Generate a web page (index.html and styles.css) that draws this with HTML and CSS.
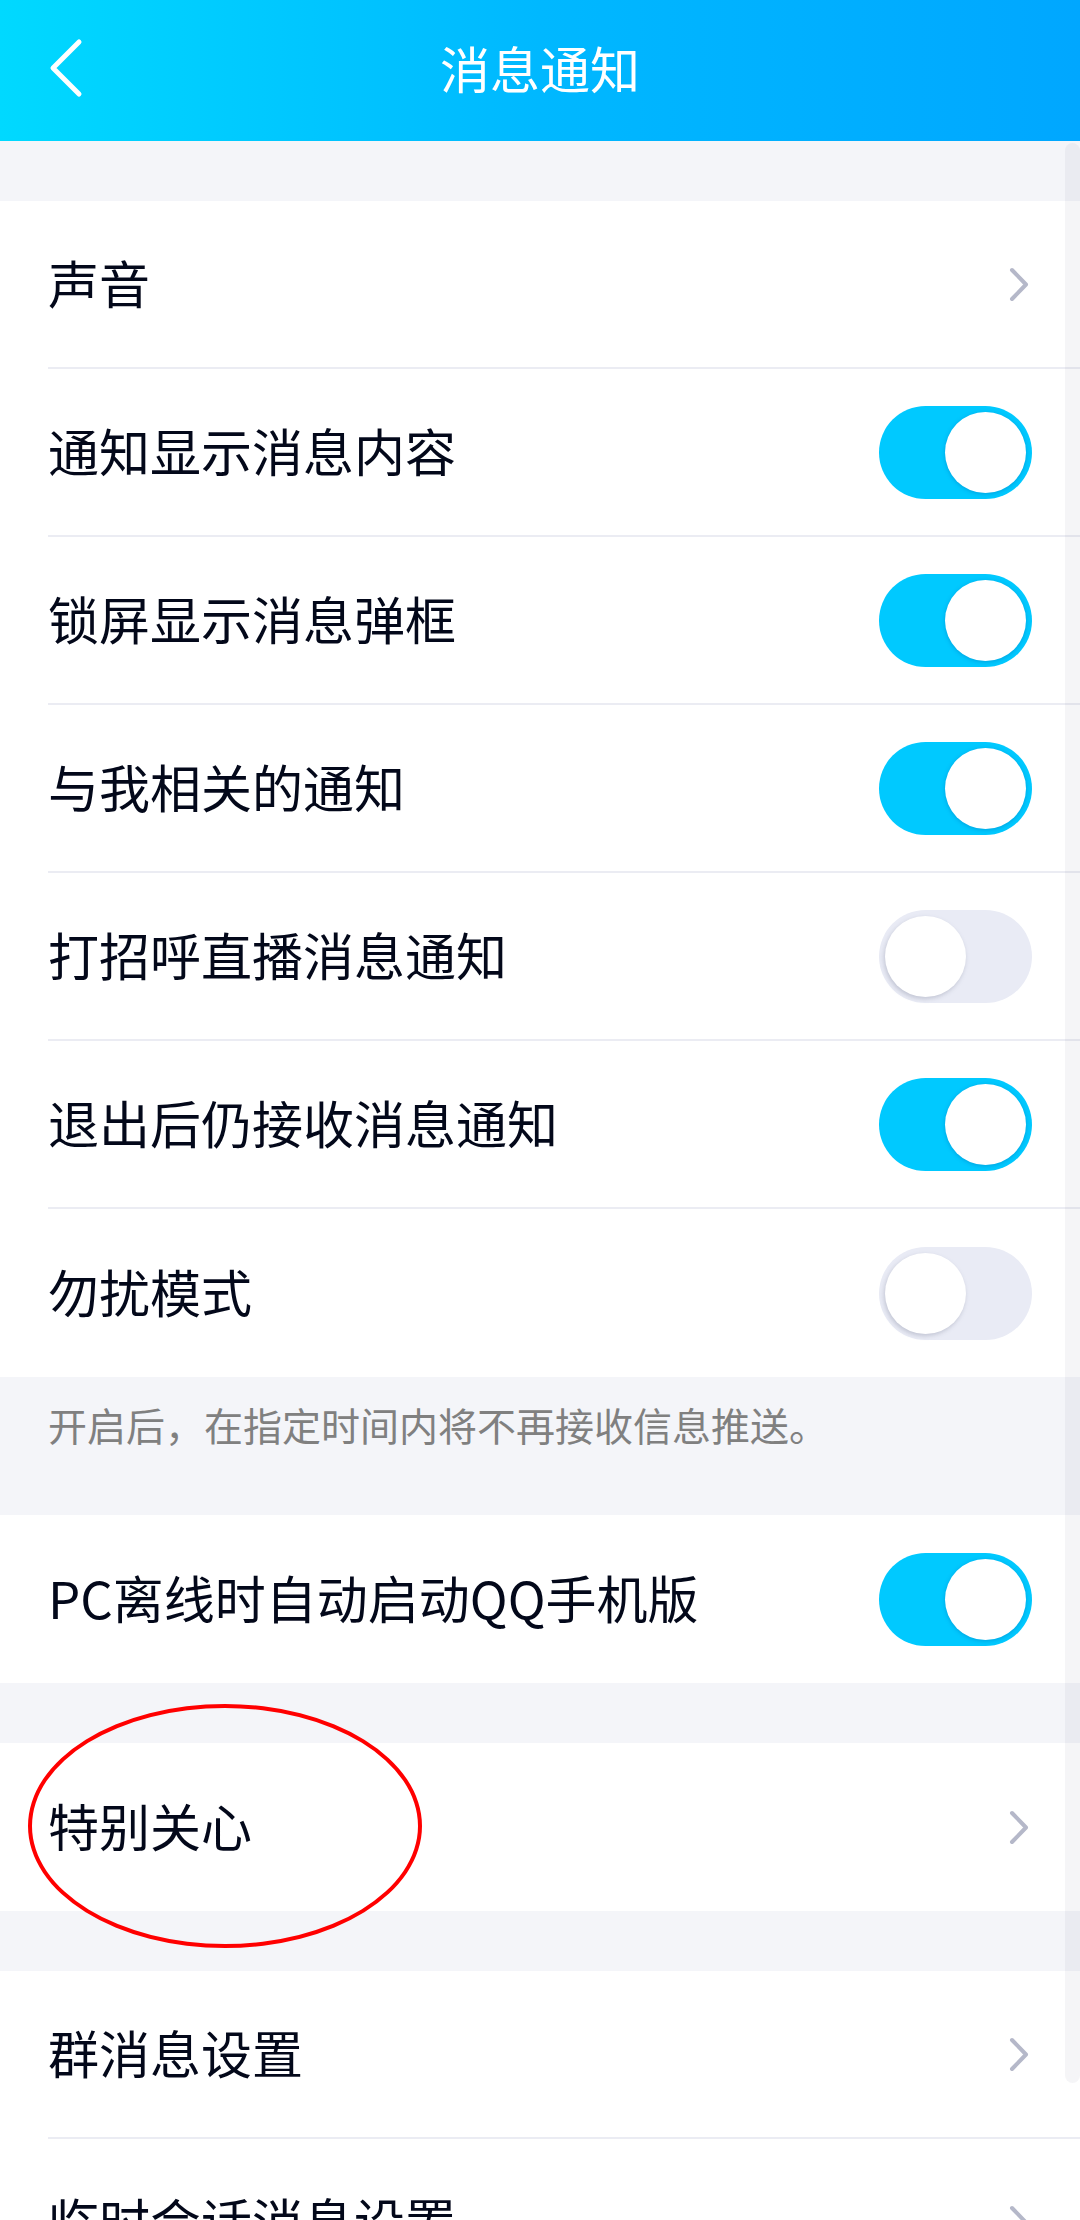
FILE: index.html
```html
<!DOCTYPE html>
<html lang="zh-CN">
<head>
<meta charset="utf-8">
<title>消息通知</title>
<link rel="stylesheet" href="styles.css">
</head>
<body>
<div class="screen">
  <header class="topbar">
    <div class="topbar-side">
      <svg class="back" width="40" height="64" viewBox="0 0 40 64" aria-hidden="true">
        <polyline points="31,6 5,32 31,58" fill="none" stroke="#ffffff" stroke-width="5" stroke-linecap="round" stroke-linejoin="round"/>
      </svg>
    </div>
    <h1 class="title">消息通知</h1>
    <div class="topbar-side"></div>
  </header>

  <div class="gap"></div>

  <section class="group">
    <div class="row"><div class="row-body"><span class="label">声音</span><svg class="chev" width="22" height="37" viewBox="0 0 22 37"><polyline points="4,4 18,18.5 4,33" fill="none" stroke="#b5b8c9" stroke-width="4" stroke-linecap="round" stroke-linejoin="round"/></svg></div></div>
    <div class="row"><div class="row-body"><span class="label">通知显示消息内容</span><span class="switch on"><span class="knob"></span></span></div></div>
    <div class="row"><div class="row-body"><span class="label">锁屏显示消息弹框</span><span class="switch on"><span class="knob"></span></span></div></div>
    <div class="row"><div class="row-body"><span class="label">与我相关的通知</span><span class="switch on"><span class="knob"></span></span></div></div>
    <div class="row"><div class="row-body"><span class="label">打招呼直播消息通知</span><span class="switch"><span class="knob"></span></span></div></div>
    <div class="row"><div class="row-body"><span class="label">退出后仍接收消息通知</span><span class="switch on"><span class="knob"></span></span></div></div>
    <div class="row last"><div class="row-body"><span class="label">勿扰模式</span><span class="switch"><span class="knob"></span></span></div></div>
  </section>

  <p class="note">开启后，在指定时间内将不再接收信息推送。</p>

  <section class="group">
    <div class="row last"><div class="row-body"><span class="label">PC离线时自动启动QQ手机版</span><span class="switch on"><span class="knob"></span></span></div></div>
  </section>

  <div class="gap"></div>

  <section class="group marked">
    <div class="row last"><div class="row-body"><span class="label">特别关心</span><svg class="chev" width="22" height="37" viewBox="0 0 22 37"><polyline points="4,4 18,18.5 4,33" fill="none" stroke="#b5b8c9" stroke-width="4" stroke-linecap="round" stroke-linejoin="round"/></svg></div></div>
    <div class="ring"></div>
  </section>

  <div class="gap"></div>

  <section class="group">
    <div class="row"><div class="row-body"><span class="label">群消息设置</span><svg class="chev" width="22" height="37" viewBox="0 0 22 37"><polyline points="4,4 18,18.5 4,33" fill="none" stroke="#b5b8c9" stroke-width="4" stroke-linecap="round" stroke-linejoin="round"/></svg></div></div>
    <div class="row"><div class="row-body"><span class="label">临时会话消息设置</span><svg class="chev" width="22" height="37" viewBox="0 0 22 37"><polyline points="4,4 18,18.5 4,33" fill="none" stroke="#b5b8c9" stroke-width="4" stroke-linecap="round" stroke-linejoin="round"/></svg></div></div>
  </section>

  <div class="scrollbar"></div>
</div>
</body>
</html>
```

FILE: styles.css
```css
* { box-sizing: border-box; }

html, body {
  margin: 0;
  padding: 0;
}

body {
  background: #f4f5f9;
  font-family: "Noto Sans CJK SC", "Noto Sans", Roboto, sans-serif;
  color: #03081a;
}

.screen {
  position: relative;
  width: 1080px;
  height: 2220px;
  overflow: hidden;
  background: #f4f5f9;
}

.topbar {
  height: 141px;
  display: grid;
  grid-template-columns: 1fr auto 1fr;
  align-items: center;
  background: linear-gradient(90deg, #00d9ff 0%, #00b8ff 50%, #00a7ff 100%);
  color: #ffffff;
}

.topbar-side {
  display: flex;
  align-items: center;
  padding-left: 48px;
  padding-bottom: 6px;
}

.back { display: block; }

.title {
  margin: 0;
  font-size: 50px;
  font-weight: 400;
  line-height: 1;
  padding-bottom: 8px;
}

.gap { height: 60px; }

.group {
  background: #ffffff;
}

.row {
  padding-left: 48px;
}

.row-body {
  height: 168px;
  display: flex;
  align-items: center;
  justify-content: space-between;
  padding-right: 48px;
  border-bottom: 2px solid #ebecf3;
}

.row.last .row-body { border-bottom: none; }

.label {
  font-size: 51px;
  line-height: 1;
  color: #03081a;
  white-space: nowrap;
  padding-bottom: 3px;
}

.chev {
  display: block;
  margin-right: 2px;
}

.switch {
  position: relative;
  width: 153px;
  height: 93px;
  border-radius: 47px;
  background: #e9ebf5;
  display: flex;
  align-items: center;
  padding: 0 6px;
  justify-content: flex-start;
}

.switch.on {
  background: #00c9ff;
  justify-content: flex-end;
}

.knob {
  width: 81px;
  height: 81px;
  border-radius: 50%;
  background: #ffffff;
  box-shadow: -1px 2px 4px rgba(120, 125, 150, 0.35);
}

.switch.on .knob {
  box-shadow: 0 1px 4px rgba(0, 90, 160, 0.35);
}

.note {
  margin: 0;
  padding: 26px 48px 0;
  height: 138px;
  font-size: 39px;
  line-height: 1.1;
  color: #808080;
}

.marked { position: relative; }

.ring {
  position: absolute;
  left: 28px;
  top: -39px;
  width: 394px;
  height: 244px;
  border: 4px solid #ff0000;
  border-radius: 50%;
  pointer-events: none;
}

.scrollbar {
  position: absolute;
  right: 0;
  top: 143px;
  width: 15px;
  height: 1940px;
  border-radius: 8px;
  background: rgba(60, 60, 90, 0.05);
}
```
